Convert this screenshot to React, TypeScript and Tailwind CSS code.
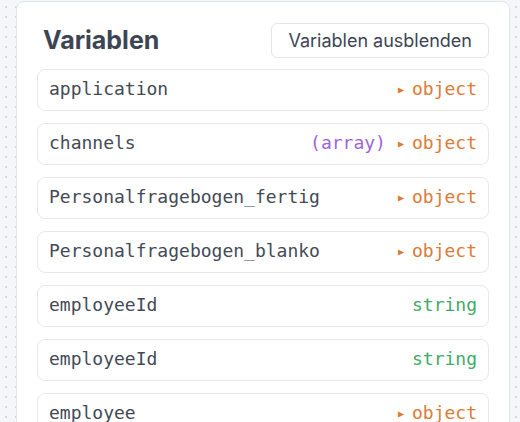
const rows: { name: string; type: "object" | "string"; array?: boolean }[] = [
  { name: "application", type: "object" },
  { name: "channels", type: "object", array: true },
  { name: "Personalfragebogen_fertig", type: "object" },
  { name: "Personalfragebogen_blanko", type: "object" },
  { name: "employeeId", type: "string" },
  { name: "employeeId", type: "string" },
  { name: "employee", type: "object" },
];

export default function App() {
  return (
    <div className="h-[422px] w-[520px] overflow-hidden bg-[#f4f6f9] bg-[radial-gradient(#d3d8e0_1px,transparent_1.2px)] bg-[size:10px_10px] bg-[position:1px_2px] pl-[16px] pr-[10px] pt-[1px]">
      <div className="h-[440px] rounded-lg border border-[#e2e5ea] bg-white pl-[20px] pr-[20px] pt-[21px]">
        <div className="flex items-center justify-between">
          <h2 className="ml-[6px] font-['Inter',sans-serif] text-[25px] font-bold leading-none text-[#3d4553]">
            Variablen
          </h2>
          <button className="h-[35px] rounded-md border border-[#e2e5ea] bg-white px-[16px] font-['Inter',sans-serif] text-[18px] font-normal text-[#3d4553]">
            Variablen ausblenden
          </button>
        </div>
        <div className="mt-[11px] flex flex-col gap-[12px]">
          {rows.map((r, i) => (
            <div
              key={i}
              className="flex h-[42px] items-center justify-between rounded-lg border border-[#e6e8ec] px-[11px] pb-[3px] font-['DejaVu_Sans_Mono',monospace] text-[18px] leading-none"
            >
              <span className="text-[#434a56]">{r.name}</span>
              <span className="flex items-center">
                {r.array && <span className="mr-[12px] text-[#a064d8]">(array)</span>}
                {r.type === "object" ? (
                  <span className="flex items-center text-[#dc7a36]">
                    <span className="mr-[8px] mt-[2px] text-[10px] leading-none">▶</span>
                    <span>object</span>
                  </span>
                ) : (
                  <span className="text-[#3fab66]">string</span>
                )}
              </span>
            </div>
          ))}
        </div>
      </div>
    </div>
  );
}
